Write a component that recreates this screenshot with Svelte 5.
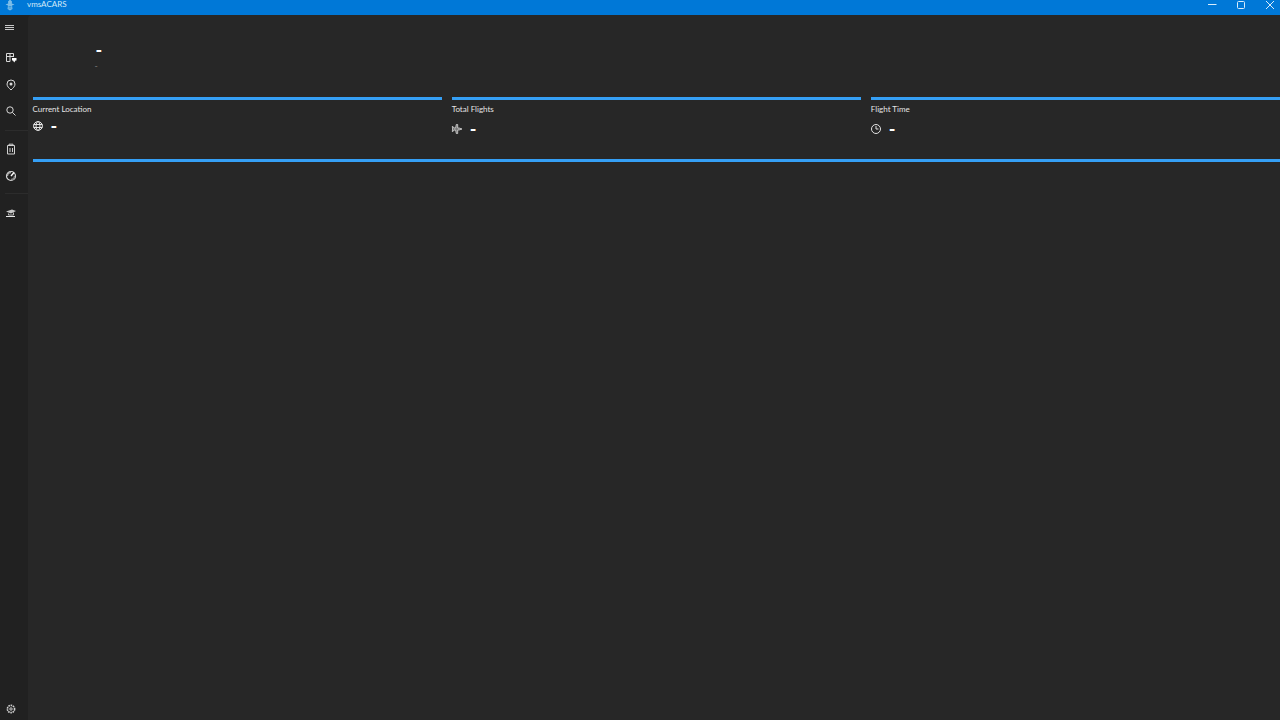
<script>
  const cards = [
    { label: 'Current Location', icon: 'globe', cls: 'up' },
    { label: 'Total Flights', icon: 'plane', cls: '' },
    { label: 'Flight Time', icon: 'clock', cls: '' }
  ];
</script>

<div class="window">
  <header class="titlebar">
    <svg class="logo" viewBox="0 0 12 12" width="12" height="12">
      <path d="M6 0.5 L8 2.5 L7.8 4.5 L10.5 5.5 L8 6.5 L8.5 10 L6 11.5 L3.5 10 L4 6.5 L1.5 5.5 L4.2 4.5 L4 2.5 Z" fill="#7dbde8" />
      <path d="M4.5 7.5H7.5M4.5 9H7.5" stroke="#3a9adb" fill="none" />
    </svg>
    <span class="apptitle">vmsACARS</span>
    <div class="winctl">
      <svg viewBox="0 0 10 10" width="10" height="10"><path d="M1 4.5H9.5" stroke="#d8ecfb" fill="none" /></svg>
      <svg viewBox="0 0 10 10" width="10" height="10"><rect x="1.5" y="1.5" width="7" height="7" rx="1" stroke="#d8ecfb" fill="none" /></svg>
      <svg viewBox="0 0 10 10" width="10" height="10"><path d="M1 1L9 9M9 1L1 9" stroke="#d8ecfb" fill="none" /></svg>
    </div>
  </header>

  <div class="body">
    <nav class="sidebar">
      <div class="navitem menu">
        <svg viewBox="0 0 12 12" width="12" height="12"><path d="M1 3.5H10M1 5.5H10M1 7.5H10" stroke="#c8c8c8" fill="none" /></svg>
      </div>
      <div class="navitem dash">
        <svg viewBox="0 0 12 12" width="12" height="12">
          <path d="M1.5 1.5H8.5V5M1.5 1.5V9.5H5M1.5 4.5H8.5M5 1.5V9.5" stroke="#d8d8d8" fill="none" />
          <path d="M7 6H11.5V8.5H10.5L9.2 10.5L8 8.5H7Z" fill="#fff" />
        </svg>
      </div>
      <div class="navitem pin">
        <svg viewBox="0 0 12 12" width="12" height="12">
          <path d="M6 11C4 9 2 7.5 2 5A4 4 0 0 1 10 5C10 7.5 8 9 6 11Z" stroke="#d8d8d8" fill="none" />
          <circle cx="6" cy="5" r="1.5" fill="#d8d8d8" />
        </svg>
      </div>
      <div class="navitem search">
        <svg viewBox="0 0 12 12" width="12" height="12">
          <circle cx="5" cy="5" r="3.2" stroke="#d8d8d8" fill="none" />
          <path d="M7.4 7.4L10.5 10.5" stroke="#d8d8d8" fill="none" />
        </svg>
      </div>
      <div class="sep first"></div>
      <div class="navitem log">
        <svg viewBox="0 0 12 12" width="12" height="12">
          <path d="M2.5 2.5H9.5V11H2.5ZM4 2.5V1.2H8V2.5" stroke="#d0d0d0" fill="none" />
          <path d="M5 5V9M7.5 5V9" stroke="#d0d0d0" fill="none" />
        </svg>
      </div>
      <div class="navitem gauge">
        <svg viewBox="0 0 12 12" width="12" height="12">
          <circle cx="6" cy="6" r="4.5" stroke="#d8d8d8" fill="none" stroke-width="1.2" />
          <path d="M6 6L9 2.5" stroke="#fff" stroke-width="1.4" fill="none" />
          <path d="M2.5 6A3.5 3.5 0 0 1 6 2.5" stroke="#aaa" stroke-width="1.4" fill="none" />
          <path d="M6 9.5A3.5 3.5 0 0 0 9.5 6" stroke="#888" stroke-width="1.4" fill="none" />
        </svg>
      </div>
      <div class="sep second"></div>
      <div class="navitem school">
        <svg viewBox="0 0 12 12" width="12" height="12">
          <path d="M1 4.5L7 2.5L11 4L6 6.5Z" fill="#c8c8c8" />
          <path d="M3.5 6.5V8H8.5V5.5" stroke="#bbb" fill="none" />
          <path d="M1 9.5H10" stroke="#e8e8e8" fill="none" />
        </svg>
      </div>
      <div class="navitem settings">
        <svg viewBox="0 0 12 12" width="12" height="12">
          <circle cx="6" cy="6" r="3.6" stroke="#d0d0d0" stroke-width="1.6" stroke-dasharray="1.6 0.7" fill="none" />
          <circle cx="6" cy="6" r="1.2" stroke="#d0d0d0" fill="none" />
        </svg>
      </div>
    </nav>

    <main class="content">
      <section class="hero">
        <span class="big">-</span>
        <span class="small">-</span>
      </section>

      <section class="cards">
        {#each cards as card}
          <article class="card">
            <h3>{card.label}</h3>
            <div class="value {card.cls}">
              {#if card.icon === 'globe'}
                <svg viewBox="0 0 12 12" width="12" height="12">
                  <circle cx="6" cy="6" r="4.4" stroke="#e4e4e4" fill="none" />
                  <ellipse cx="6" cy="6" rx="2" ry="4.4" stroke="#e4e4e4" fill="none" />
                  <path d="M1.6 4.5H10.4M1.6 7.5H10.4" stroke="#e4e4e4" fill="none" />
                </svg>
              {:else if card.icon === 'plane'}
                <svg viewBox="0 0 12 12" width="12" height="12">
                  <path d="M11 6L8.5 5.1L6.7 5V1.5H5.3L4.6 5H3L2 3.5H1.3L1.6 6L1.3 8.5H2L3 7H4.6L5.3 10.5H6.7V7L8.5 6.9Z" stroke="#d8d8d8" fill="#777" stroke-width="0.8" />
                </svg>
              {:else}
                <svg viewBox="0 0 12 12" width="12" height="12">
                  <circle cx="6" cy="6" r="4.5" stroke="#e4e4e4" fill="none" />
                  <path d="M6 3V6H8.5" stroke="#e4e4e4" fill="none" />
                </svg>
              {/if}
              <span class="dash-val">-</span>
            </div>
          </article>
        {/each}
      </section>

      <div class="rule"></div>
    </main>
  </div>
</div>

<style>
  :global(body) {
    margin: 0;
    background: #272727;
  }
  .window {
    width: 1280px;
    height: 720px;
    display: flex;
    flex-direction: column;
    overflow: hidden;
    font-family: "Lato", "Noto Sans", sans-serif;
    color: #e8e8e8;
  }
  .titlebar {
    height: 15px;
    flex: none;
    background: #0078d7;
    display: flex;
    align-items: flex-start;
    overflow: hidden;
  }
  .logo {
    margin-left: 4px;
    margin-top: -1px;
  }
  .apptitle {
    margin-left: 11px;
    font-size: 8px;
    line-height: 8px;
    color: #d4e9f8;
  }
  .winctl {
    margin-left: auto;
    display: flex;
    gap: 19px;
    padding-right: 5px;
  }
  .winctl svg {
    display: block;
  }
  .body {
    flex: 1;
    display: flex;
    background: #212121;
    min-height: 0;
  }
  .sidebar {
    width: 28px;
    flex: none;
    display: flex;
    flex-direction: column;
    align-items: flex-start;
    padding: 7px 0 0 5px;
    box-sizing: border-box;
  }
  .navitem {
    height: 12px;
    width: 12px;
    flex: none;
  }
  .navitem svg {
    display: block;
  }
  .menu { margin-left: -1px; }
  .dash { margin-top: 18px; }
  .pin { margin-top: 15px; }
  .search { margin-top: 14px; }
  .sep {
    width: 23px;
    height: 1px;
    background: #2c2c2c;
    flex: none;
  }
  .sep.first { margin-top: 13px; }
  .log { margin-top: 12px; }
  .gauge { margin-top: 15px; }
  .sep.second { margin-top: 11px; }
  .school { margin-top: 13px; }
  .settings { margin-top: auto; margin-bottom: 5px; }
  .content {
    flex: 1;
    min-width: 0;
    background: #272727;
    border-top-left-radius: 4px;
    padding-left: 4.5px;
    display: flex;
    flex-direction: column;
  }
  .hero {
    height: 82px;
    flex: none;
    display: flex;
    flex-direction: column;
    padding-left: 63px;
    box-sizing: border-box;
    padding-top: 27px;
  }
  .big {
    font-size: 18px;
    line-height: 17px;
    font-weight: 700;
    color: #fff;
  }
  .small {
    font-size: 9px;
    line-height: 11px;
    margin-top: 1px;
    margin-left: -1px;
    color: #777;
  }
  .cards {
    display: grid;
    grid-template-columns: repeat(3, 1fr);
    gap: 10px;
    flex: none;
  }
  .card {
    border-top: 3px solid #359ff5;
    height: 62px;
    box-sizing: border-box;
    padding-top: 3px;
  }
  h3 {
    margin: 0;
    font-size: 8px;
    line-height: 12px;
    font-weight: 400;
    color: #e4e4e4;
  }
  .value {
    display: flex;
    align-items: center;
    gap: 7px;
    margin: 6px 0 0 -1px;
    height: 15px;
  }
  .value.up {
    margin-top: 3px;
  }
  .dash-val {
    font-size: 18px;
    line-height: 15px;
    font-weight: 700;
    color: #fff;
    position: relative;
    top: 1px;
  }
  .rule {
    height: 3px;
    background: #359ff5;
    flex: none;
  }
</style>
